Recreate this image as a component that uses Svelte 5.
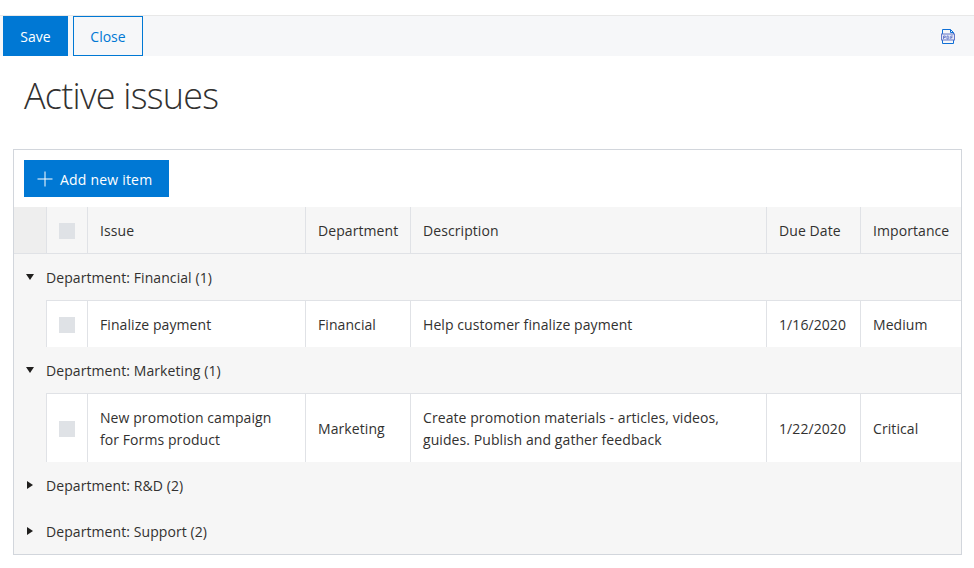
<!-- Active issues list form. -->

<script>
	const Columns = ["Issue", "Department", "Description", "Due Date", "Importance"]

	const Groups = [
		{
			Name: "Financial", Count: 1, Open: true,
			Items: [{ Issue: "Finalize payment", Department: "Financial", Description: "Help customer finalize payment", Due: "1/16/2020", Importance: "Medium" }]
		},
		{
			Name: "Marketing", Count: 1, Open: true,
			Items: [{ Issue: "New promotion campaign for Forms product", Department: "Marketing", Description: "Create promotion materials - articles, videos, guides. Publish and gather feedback", Due: "1/22/2020", Importance: "Critical" }]
		},
		{ Name: "R&D", Count: 2, Open: false, Items: [] },
		{ Name: "Support", Count: 2, Open: false, Items: [] }
	]
</script>

<div class="page">
	<div class="toolbar">
		<button class="save">Save</button>
		<button class="close">Close</button>
		<svg class="pdf" width="14" height="15" viewBox="0 0 14 15" fill="none">
			<path d="M1.500 5V.5h8l3 3V5M1.500 11v3.500h11V11M9.500.5v3h3" stroke="#0f6fd6" />
			<rect x=".5" y="5" width="13" height="6" fill="#e4e8f6" stroke="#6577c8" />
			<path d="M2.500 10V7h1.800v1.500H2.500M6 7v3h1.200l.6-.6V7.600L7.200 7H6M9.800 10V7h2M9.800 8.500h1.600" stroke="#6577c8" stroke-width=".9" />
		</svg>
	</div>

	<h1>Active issues</h1>

	<div class="panel">
		<div class="actions">
			<button class="add">
				<svg width="16" height="16" viewBox="0 0 16 16"><path d="M8 .5v15M.5 8h15" stroke="#fff" stroke-width="1" /></svg>
				<span>Add new item</span>
			</button>
		</div>

		<div class="row head">
			<div class="indent"></div>
			<div class="cell check"><i class="box"></i></div>
			{#each Columns as Column}
				<div class="cell">{Column}</div>
			{/each}
		</div>

		{#each Groups as Group}
			<div class="group">
				<span class="caret" class:open={Group.Open}></span>
				<span>Department: {Group.Name} ({Group.Count})</span>
			</div>
			{#each Group.Items as Item}
				<div class="row item">
					<div class="indent"></div>
					<div class="cell check"><i class="box"></i></div>
					<div class="cell">{Item.Issue}</div>
					<div class="cell">{Item.Department}</div>
					<div class="cell">{Item.Description}</div>
					<div class="cell">{Item.Due}</div>
					<div class="cell">{Item.Importance}</div>
				</div>
			{/each}
		{/each}
	</div>
</div>

<style>
	:global(body) {
		background: #fff;
		font-family: "Open Sans", "Noto Sans", sans-serif;
		font-size: 14px;
		color: #323130;
	}

	.page {
		padding-top: 15px;
	}

	.toolbar {
		display: flex;
		align-items: stretch;
		gap: 5px;
		height: 40px;
		padding-left: 3px;
		padding-right: 19px;
		background: #f6f7f9;
		border-top: 1px solid #e8e8e8;
	}

	button {
		font: inherit;
		cursor: pointer;
	}

	.save {
		width: 65px;
		border: 0;
		background: #0078d4;
		color: #fff;
	}

	.close {
		width: 70px;
		border: 1px solid #0078d4;
		background: #f6f7f9;
		color: #0078d4;
	}

	.pdf {
		margin: auto 0 auto auto;
	}

	h1 {
		margin: 14px 0 28px 24px;
		font-family: "Open Sans", sans-serif;
		font-weight: 300;
		font-size: 36px;
		line-height: 51px;
		letter-spacing: -0.75px;
		color: #323130;
	}

	.panel {
		margin: 0 12px 0 13px;
		border: 1px solid #d2d6dc;
		background: #f6f6f6;
	}

	.actions {
		padding: 10px;
		background: #fff;
	}

	.add {
		display: flex;
		align-items: center;
		gap: 7px;
		height: 37px;
		width: 145px;
		padding: 0 13px;
		border: 0;
		background: #0078d4;
		color: #fff;
		letter-spacing: 0.2px;
	}

	.add span {
		padding-top: 2px;
	}

	.row {
		display: grid;
		grid-template-columns: 32px 41px 218px 105px 356px 94px 1fr;
		letter-spacing: 0.08px;
	}

	.head {
		height: 46px;
		border-bottom: 1px solid #e0e2e6;
	}

	.indent {
		background: #f6f6f6;
	}

	.head .indent {
		background: #eee;
	}

	.cell {
		display: flex;
		align-items: center;
		padding: 2px 12px 0;
		border-left: 1px solid #e0e2e6;
		line-height: 22px;
	}

	.head .cell {
		background: #f6f6f6;
	}

	.item .cell {
		background: #fff;
		border-top: 1px solid #e0e2e6;
		padding: 13px 28px 11px 12px;
	}

	.item .cell.check {
		padding: 2px 0 0;
	}

	.item {
		min-height: 47px;
	}

	.check {
		justify-content: center;
	}

	.box {
		display: block;
		width: 16px;
		height: 16px;
		background: #dfe2e6;
	}

	.group {
		display: flex;
		align-items: center;
		height: 46px;
		padding-left: 12px;
		letter-spacing: 0.08px;
	}

	.caret {
		width: 20px;
		display: flex;
		flex: none;
	}

	.caret::before {
		content: "";
		margin-left: 1px;
		border-style: solid;
		border-width: 4px 0 4px 6px;
		border-color: transparent transparent transparent #201f1e;
	}

	.caret.open::before {
		margin-left: 0;
		border-width: 6px 4px 0 4px;
		border-color: #201f1e transparent transparent transparent;
	}
</style>
